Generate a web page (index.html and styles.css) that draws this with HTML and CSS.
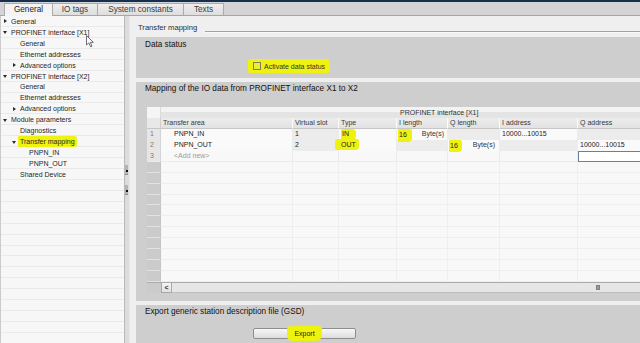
FILE: index.html
```html
<!DOCTYPE html>
<html lang="en">
<head>
<meta charset="utf-8">
<title>Transfer mapping</title>
<link rel="stylesheet" href="styles.css">
</head>
<body>
<div class="app">
  <div class="topline"></div>
  <div class="tabbar">
    <div class="tab active">General</div>
    <div class="tab t-io">IO tags</div>
    <div class="tab t-sys">System constants</div>
    <div class="tab t-txt">Texts</div>
  </div>
  <div class="main">
    <div class="tree">
      <div class="node l1"><span class="slot"><i class="arr right"></i></span>General</div>
      <div class="node l1"><span class="slot"><i class="arr down"></i></span>PROFINET interface [X1]</div>
      <div class="node l2"><span class="slot"></span>General</div>
      <div class="node l2"><span class="slot"></span>Ethernet addresses</div>
      <div class="node l2"><span class="slot"><i class="arr right"></i></span>Advanced options</div>
      <div class="node l1"><span class="slot"><i class="arr down"></i></span>PROFINET interface [X2]</div>
      <div class="node l2"><span class="slot"></span>General</div>
      <div class="node l2"><span class="slot"></span>Ethernet addresses</div>
      <div class="node l2"><span class="slot"><i class="arr right"></i></span>Advanced options</div>
      <div class="node l1"><span class="slot"><i class="arr down"></i></span>Module parameters</div>
      <div class="node l2"><span class="slot"></span>Diagnostics</div>
      <div class="node l2"><span class="slot"><i class="arr down"></i></span><span class="hl tree-hl">Transfer mapping</span></div>
      <div class="node l3"><span class="slot"></span>PNPN_IN</div>
      <div class="node l3"><span class="slot"></span>PNPN_OUT</div>
      <div class="node l2"><span class="slot"></span>Shared Device</div>
    </div>
    <div class="splitter">
      <div class="grip"></div>
      <div class="grip"></div>
    </div>
    <div class="content">
      <div class="page-title"><span class="pt-text">Transfer mapping</span><span class="rule"></span></div>

      <div class="group g-status">
        <div class="g-title">Data status</div>
        <div class="check-row"><span class="hl check-hl"><span class="checkbox"></span><span class="check-label">Activate data status</span></span></div>
      </div>

      <div class="group g-map">
        <div class="g-title">Mapping of the IO data from PROFINET interface X1 to X2</div>
        <div class="grid-wrap">
          <div class="row grp">
            <div class="cell corner"></div>
            <div class="cell grp-empty"></div>
            <div class="cell grp-label">PROFINET interface [X1]</div>
          </div>
          <div class="row hdr">
            <div class="cell corner2"></div>
            <div class="cell">Transfer area</div>
            <div class="cell">Virtual slot</div>
            <div class="cell">Type</div>
            <div class="cell">I length</div>
            <div class="cell">Q length</div>
            <div class="cell">I address</div>
            <div class="cell">Q address</div>
          </div>
          <div class="row data">
            <div class="cell num">1</div>
            <div class="cell name">PNPN_IN</div>
            <div class="cell ro">1</div>
            <div class="cell"><span class="hl hl-in">IN</span></div>
            <div class="cell len"><span class="hl hl-16a">16</span><span class="unit">Byte(s)</span></div>
            <div class="cell ro"></div>
            <div class="cell">10000...10015</div>
            <div class="cell ro"></div>
          </div>
          <div class="row data">
            <div class="cell num">2</div>
            <div class="cell name">PNPN_OUT</div>
            <div class="cell ro">2</div>
            <div class="cell"><span class="hl hl-out">OUT</span></div>
            <div class="cell ro"></div>
            <div class="cell len"><span class="hl hl-16b">16</span><span class="unit">Byte(s)</span></div>
            <div class="cell ro"></div>
            <div class="cell">10000...10015</div>
          </div>
          <div class="row data">
            <div class="cell num">3</div>
            <div class="cell name add">&lt;Add new&gt;</div>
            <div class="cell"></div>
            <div class="cell"></div>
            <div class="cell"></div>
            <div class="cell"></div>
            <div class="cell"></div>
            <div class="cell selected"></div>
          </div>
          <div class="row empty"><div class="cell num"></div><div class="cell"></div><div class="cell"></div><div class="cell"></div><div class="cell"></div><div class="cell"></div><div class="cell"></div><div class="cell"></div></div>
          <div class="row empty"><div class="cell num"></div><div class="cell"></div><div class="cell"></div><div class="cell"></div><div class="cell"></div><div class="cell"></div><div class="cell"></div><div class="cell"></div></div>
          <div class="row empty"><div class="cell num"></div><div class="cell"></div><div class="cell"></div><div class="cell"></div><div class="cell"></div><div class="cell"></div><div class="cell"></div><div class="cell"></div></div>
          <div class="row empty"><div class="cell num"></div><div class="cell"></div><div class="cell"></div><div class="cell"></div><div class="cell"></div><div class="cell"></div><div class="cell"></div><div class="cell"></div></div>
          <div class="row empty"><div class="cell num"></div><div class="cell"></div><div class="cell"></div><div class="cell"></div><div class="cell"></div><div class="cell"></div><div class="cell"></div><div class="cell"></div></div>
          <div class="row empty"><div class="cell num"></div><div class="cell"></div><div class="cell"></div><div class="cell"></div><div class="cell"></div><div class="cell"></div><div class="cell"></div><div class="cell"></div></div>
          <div class="row empty"><div class="cell num"></div><div class="cell"></div><div class="cell"></div><div class="cell"></div><div class="cell"></div><div class="cell"></div><div class="cell"></div><div class="cell"></div></div>
          <div class="row empty"><div class="cell num"></div><div class="cell"></div><div class="cell"></div><div class="cell"></div><div class="cell"></div><div class="cell"></div><div class="cell"></div><div class="cell"></div></div>
          <div class="row empty"><div class="cell num"></div><div class="cell"></div><div class="cell"></div><div class="cell"></div><div class="cell"></div><div class="cell"></div><div class="cell"></div><div class="cell"></div></div>
          <div class="row empty"><div class="cell num"></div><div class="cell"></div><div class="cell"></div><div class="cell"></div><div class="cell"></div><div class="cell"></div><div class="cell"></div><div class="cell"></div></div>
          <div class="row empty"><div class="cell num"></div><div class="cell"></div><div class="cell"></div><div class="cell"></div><div class="cell"></div><div class="cell"></div><div class="cell"></div><div class="cell"></div></div>
          <div class="hscroll">
            <div class="hs-num"></div>
            <div class="hs-btn">&lt;</div>
            <div class="hs-track"><span class="hs-grip"></span></div>
          </div>
        </div>
      </div>

      <div class="group g-export">
        <div class="g-title">Export generic station description file (GSD)</div>
        <div class="btn-row"><button class="btn"><span class="hl hl-exp">Export</span></button></div>
      </div>
    </div>
  </div>
  <svg class="cursor" width="9" height="13" viewBox="0 0 9 13"><path d="M0.5 0.5 L0.5 10 L2.8 7.9 L4.6 11.8 L6 11.2 L4.3 7.4 L7.4 7.4 Z" fill="#fafafa" stroke="#606060" stroke-width="0.9" stroke-linejoin="round"/></svg>
</div>
</body>
</html>
```

FILE: styles.css
```css
* { box-sizing: border-box; margin: 0; padding: 0; }
html, body { width: 640px; height: 343px; overflow: hidden; background: #efefef; }
body { font-family: "Liberation Sans", Arial, sans-serif; font-size: 7px; color: #222; }

.app { width: 640px; height: 343px; display: flex; flex-direction: column; position: relative; overflow: hidden; }

.topline { height: 2px; flex: none; background: #17304f; }

.tabbar { height: 14px; flex: none; background: #d4d4d4; border-bottom: 1px solid #a6a6a6; display: flex; align-items: flex-end; padding-left: 4px; }
.tab { height: 12px; width: 46px; margin-right: -1px; border: 1px solid #ababab; border-bottom: none; background: linear-gradient(#eeeeee, #dedede); font-size: 8.2px; line-height: 11px; text-align: center; color: #3a3a3a; }
.tab.active { width: 49px; height: 13px; margin-bottom: -1px; background: #f4f4f4; position: relative; z-index: 1; color: #222; }
.t-io { width: 46px; }
.t-sys { width: 87px; }
.t-txt { width: 41px; }

.main { flex: 1; display: flex; min-height: 0; }

.tree { width: 124px; flex: none; border-left: 1px solid #cbcbcb; background: #f7f7f7 repeating-linear-gradient(to bottom, transparent 0, transparent 9.93px, #eaeaea 9.93px, #eaeaea 10.93px); }
.node { height: 10.93px; display: flex; align-items: center; white-space: nowrap; color: #262626; }
.node.l1 { padding-left: 1px; }
.node.l2 { padding-left: 10px; }
.node.l3 { padding-left: 19px; }
.slot { width: 9px; flex: none; display: flex; align-items: center; height: 100%; }
.arr { display: block; width: 0; height: 0; }
.arr.right { margin-left: 2px; border-left: 3px solid #2a2a2a; border-top: 2.5px solid transparent; border-bottom: 2.5px solid transparent; }
.arr.down { margin-left: 1px; margin-top: 1px; border-top: 3px solid #2a2a2a; border-left: 2.5px solid transparent; border-right: 2.5px solid transparent; }

.hl { background: #eef20e; position: relative; }
.tree-hl { padding: 2px 2px 2px 2px; margin-left: -2px; border-radius: 1px 3px 2px 1px; }

.splitter { width: 6px; flex: none; background: #dcdcdc; border-left: 1px solid #b9b9b9; border-right: 1px solid #e6e6e6; padding-top: 149px; }
.grip { width: 3px; height: 10px; margin-bottom: 10px; background: #b3b3b3; border-bottom: 1px solid #8f8f8f; display: flex; align-items: flex-end; justify-content: center; padding-bottom: 2px; }
.grip::after { content: ""; width: 2px; height: 2px; background: #111; }

.content { flex: 1; min-width: 0; background: #efefef; padding-left: 6px; display: flex; flex-direction: column; overflow: hidden; }

.page-title { height: 21px; flex: none; display: flex; padding-left: 2px; padding-top: 6px; }
.pt-text { font-size: 7.6px; line-height: 11px; color: #2e2e2e; white-space: nowrap; }
.rule { flex: 1; margin-left: 8px; margin-top: 9px; height: 2px; border-top: 1px solid #a2a2a2; border-bottom: 1px solid #fafafa; }

.group { background: #cecece; flex: none; }
.group + .group { margin-top: 4px; }
.g-title { padding-left: 9px; font-size: 8.2px; line-height: 10px; color: #111; white-space: nowrap; }

.g-status { padding-top: 3px; padding-bottom: 7px; }
.check-row { margin-top: 11px; height: 10px; padding-left: 112px; display: flex; align-items: center; }
.check-hl { display: flex; align-items: center; padding: 2px 5px 2px 5px; height: 14px; border-radius: 2px 4px 3px 2px; }
.checkbox { width: 8px; height: 8px; border: 1px solid #7e7e5a; background: #e9ec3a; margin-right: 3px; }
.check-label { color: #333; }

.g-map { padding-top: 2px; padding-bottom: 8px; }
.grid-wrap { margin-left: 11px; margin-top: 13px; }
.row { display: grid; grid-template-columns: 14px 132px 46px 58px 51px 52px 78px 82px; height: 10.93px; }
.cell { white-space: nowrap; line-height: 10px; padding-left: 2px; border-right: 1px solid #ebebeb; border-bottom: 1px solid #ebebeb; background: #f8f8f8; color: #222; }

.row.grp { height: 11px; grid-template-columns: 14px 236px 263px; }
.grp .cell { border: none; background: linear-gradient(#f3f3f3 0 45%, #e4e4e4 45% 100%); border-bottom: 1px solid #d6d6d6; color: #333; line-height: 11px; padding-left: 3px; }
.grp .corner { background: #f5f5f5; border-right: 1px solid #dadada; border-bottom: none; }

.row.hdr { height: 11px; }
.hdr .cell { background: linear-gradient(#ececec, #e2e2e2); border-right: 1px solid #fbfbfb; border-bottom: 1px solid #c6c6c6; color: #3a3a3a; line-height: 10px; padding-left: 2px; }
.hdr .corner2 { background: #e8e8e8; border-right: 1px solid #d0d0d0; }

.data .cell { background: #fafafa; }
.data .cell.ro { background: #ececec; }
.data .cell.num { background: #e6e6e6; color: #7a7a7a; padding-left: 3px; border-right: 1px solid #d4d4d4; }
.data .name { padding-left: 13px; }
.data .add { color: #9a9a9a; }
.data .cell.selected { background: #fff; border: 1px solid #6d7f98; }
.row.data:nth-child(5) .cell { background: #f8f8f8; }
.row.data:nth-child(5) .cell.num { background: #e6e6e6; }
.row.data:nth-child(5) .cell.selected { background: #fff; }

.len { display: flex; }
.unit { margin-left: 14px; color: #333; }
.hl-16a { padding: 1px 5px 1px 1px; margin-left: -1px; border-radius: 1px 2px 4px 1px; }
.hl-16b { padding: 1px 4px 1px 1px; margin-left: -1px; border-radius: 1px 2px 4px 1px; }
.hl-16a + .unit { margin-left: 10px; }
.hl-16b + .unit { margin-left: 11px; }
.hl-in { display: inline-block; padding: 0 7px 3px 1px; margin-top: -3px; line-height: 10px; border-radius: 1px 4px 6px 1px; }
.hl-out { padding: 2px 3px 2px 6px; margin-left: -6px; border-radius: 3px 2px 4px 2px; }

.empty .cell { background: #f8f8f8; border-right: 1px solid #efefef; border-bottom: 1px solid #eeeeee; }
.empty .cell.num { background: #cbcbcb; border-right: 1px solid #c4c4c4; border-bottom: 1px solid #e2e2e2; }

.hscroll { display: flex; height: 11px; border-top: 1px solid #ababab; }
.hs-num { width: 14px; flex: none; background: #cbcbcb; }
.hs-btn { width: 11px; flex: none; background: linear-gradient(#f5f5f5, #e2e2e2); border: 1px solid #a8a8a8; border-top: none; font-size: 7px; line-height: 9px; text-align: center; color: #333; font-weight: bold; }
.hs-track { flex: 1; background: #e6e6e6; border-bottom: 1px solid #bdbdbd; display: flex; align-items: center; padding-left: 424px; }
.hs-grip { width: 4px; height: 5px; background: #9a9a9a; border: 1px solid #7f7f7f; }

.g-export { padding-top: 2px; flex: 1; }
.btn-row { margin-top: 11px; padding-left: 117px; }
.btn { display: block; width: 103px; height: 11px; border: 1px solid #8e8e8e; border-radius: 2px; background: linear-gradient(#f8f8f8, #dcdcdc); font-family: "Liberation Sans", Arial, sans-serif; font-size: 7px; color: #222; line-height: 9px; text-align: center; }
.hl-exp { display: inline-block; padding: 3px 7px 3px 7px; margin-top: -3px; line-height: 9px; border-radius: 4px 3px 6px 5px; }

.cursor { position: absolute; left: 86px; top: 35px; }
```
